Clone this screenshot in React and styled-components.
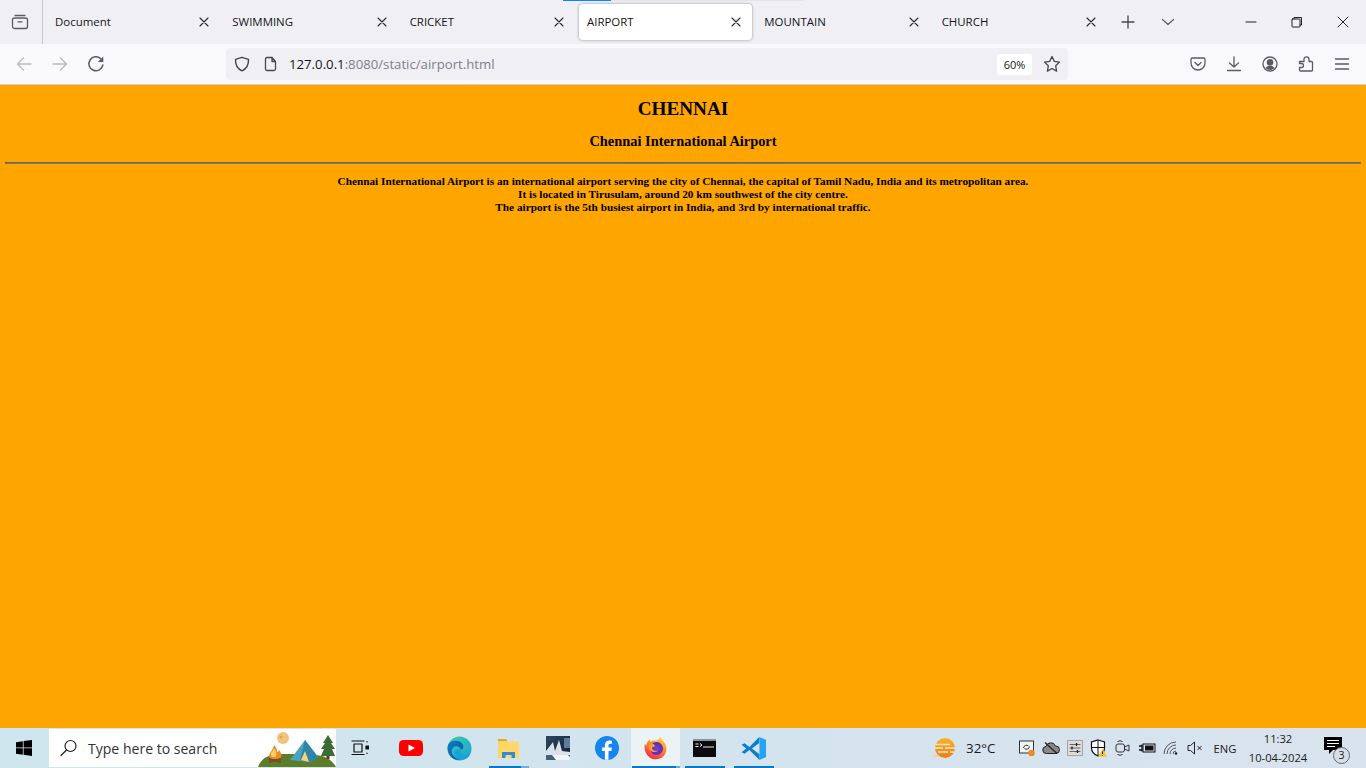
import React from "react";
import styled, { createGlobalStyle } from "styled-components";

const Global = createGlobalStyle`
  html, body { margin: 0; padding: 0; height: 100%; overflow: hidden; }
  #root { height: 100%; }
`;
const UI = `"Open Sans", "Noto Sans", sans-serif`;

const Window = styled.div`
  display: flex; flex-direction: column; width: 1366px; height: 768px; font-family: ${UI}; overflow: hidden;
`;
const TabBar = styled.div`
  position: relative; display: flex; align-items: stretch; height: 44px; background: #f0f0f4; flex: none;
`;
const Progress = styled.div`
  position: absolute; left: 563px; top: 0; width: 240px; height: 1px; background: #e4e4e6;
  &::before { content: ""; display: block; width: 48px; height: 1px; background: #0a84ff; }
`;
const ViewButton = styled.div`
  display: flex; align-items: center; justify-content: center; width: 43px; box-sizing: border-box; padding-right: 3px; border-right: 1px solid #c6c6cb; flex: none;
`;
const Tab = styled.div`
  display: flex; align-items: center; width: 177.33px; box-sizing: border-box; margin: 4px 0; flex: none; padding-left: 4px;
`;
const TabCard = styled.div`
  flex: 1; display: flex; align-items: center; justify-content: space-between; padding: 0 10px 0 8px; height: 36px; border-radius: 4px;
  background: ${p => (p.$active ? "#ffffff" : "transparent")};
  box-shadow: ${p => (p.$active ? "0 0 3px rgba(0,0,0,.4)" : "none")};
`;
const TabLabel = styled.span`
  font-size: 11.45px; color: #15141a; line-height: 16px;
`;
const TabEnd = styled.div`
  display: flex; align-items: center; justify-content: center; flex: none; width: ${p => p.$w}px;
`;
const Spacer = styled.div` flex: 1; `;
const Toolbar = styled.div`
  display: flex; align-items: center; height: 40px; background: #f9f9fb; border-bottom: 1px solid #cfcfd8; padding: 0 6px; flex: none;
`;
const ToolButton = styled.div`
  display: flex; align-items: center; justify-content: center; width: 36px; height: 32px; flex: none;
`;
const UrlBar = styled.div`
  flex: 1; display: flex; align-items: center; height: 32px; margin: 0 112px; background: #f0f0f4; border-radius: 4px; padding: 0 7px 0 8px;
`;
const UrlIcon = styled.div`
  display: flex; width: ${p => p.$w}px; flex: none; justify-content: flex-start;
`;
const Url = styled.div`
  flex: 1; font-size: 13.2px; color: #7f7f8b; white-space: nowrap;
  b { font-weight: 400; color: #15141a; }
`;
const Zoom = styled.div`
  display: flex; align-items: center; justify-content: center; width: 35px; height: 21px; background: #fff; border-radius: 3px; font-size: 11px; color: #15141a; margin-right: 11px;
`;
const Page = styled.main`
  flex: 1; background: #ffa500; padding: 0 5px; font-family: "Liberation Serif", "Times New Roman", serif; color: #000; text-align: center; font-weight: 700; min-height: 0;
`;
const City = styled.h1`
  font-size: 19.2px; line-height: 22px; margin: 13px 0 0;
`;
const Airport = styled.h2`
  font-size: 14.4px; line-height: 16px; margin: 13px 0 0;
`;
const Rule = styled.hr`
  margin: 13px 0 0; height: 2px; border: 0; background: #666; box-sizing: border-box; border-bottom: 1px solid #8a7a50;
`;
const Text = styled.p`
  font-size: 11.25px; line-height: 12.8px; margin: 11px 0 0;
`;
const Taskbar = styled.div`
  display: flex; align-items: stretch; height: 40px; flex: none; background: linear-gradient(90deg, #cfe6ef 0%, #d3e4ee 50%, #d9e3ee 100%); color: #1b1b1b;
`;
const Start = styled.div`
  display: flex; align-items: center; justify-content: center; width: 49px; box-sizing: border-box; padding-right: 1px; flex: none;
`;
const Search = styled.div`
  position: relative; display: flex; align-items: center; width: 287px; margin: 1px 1px 1px 0; background: #fff; box-sizing: border-box; padding-left: 11px; flex: none; overflow: hidden;
`;
const SearchText = styled.span`
  margin-left: 10px; font-size: 14.05px; color: #333; white-space: nowrap;
`;
const SearchArt = styled.svg`
  position: absolute; right: 0; top: 0;
`;
const TaskItem = styled.div`
  position: relative; display: flex; align-items: center; justify-content: center; width: 49px; flex: none;
  background: ${p => (p.$active ? "rgba(255,255,255,.55)" : "transparent")};
  &::after {
    content: ""; display: ${p => (p.$bar ? "block" : "none")}; position: absolute; bottom: 0; height: 2px;
    left: ${p => (p.$active ? 1 : 4.5)}px; right: ${p => (p.$active ? 0 : 4.5)}px;
    background: ${p => (p.$split
      ? `linear-gradient(90deg, #0a78c8 calc(100% - ${p.$split}px), #6aaedd calc(100% - ${p.$split}px))`
      : "#0a78c8")};
  }
`;
const TaskViewIcon = styled.span`
  display: flex; margin-right: 3px;
`;
const Weather = styled.div`
  display: flex; align-items: center; margin-left: 155px; gap: 9px; width: 82px; flex: none; font-size: 13.4px;
`;
const Tray = styled.div`
  display: flex; align-items: center; flex: none;
`;
const TrayIcon = styled.div`
  display: flex; align-items: center; justify-content: center; width: 24px; flex: none;
`;
const Lang = styled.div`
  width: 36px; text-align: center; font-size: 11.2px; flex: none; align-self: center;
`;
const Clock = styled.div`
  width: 70px; text-align: center; font-size: 11.2px; line-height: 19px; flex: none; align-self: center;
`;
const Notify = styled.div`
  position: relative; display: flex; align-items: center; justify-content: center; width: 40px; flex: none;
  svg { margin-bottom: 5px; }
`;
const Badge = styled.div`
  position: absolute; left: 20px; top: 18.5px; width: 15px; height: 15px; border-radius: 50%; background: #d4dfe8; border: 1px solid #666; font-size: 10.5px; line-height: 15px; text-align: center; color: #222;
`;

const Svg = ({ s = 16, c = "#5b5b66", w = 1.3, children, vb }) => (
  <svg width={s} height={s} viewBox={vb || `0 0 ${s} ${s}`} fill="none" stroke={c} strokeWidth={w} strokeLinecap="round" strokeLinejoin="round">{children}</svg>
);
const Close = () => <Svg s={12} c="#2b2a33" w={1.1}><path d="M2 2l8 8M10 2l-8 8" /></Svg>;

const tabs = ["Document", "SWIMMING", "CRICKET", "AIRPORT", "MOUNTAIN", "CHURCH"];

const YouTube = () => (
  <svg width="26" height="18" viewBox="0 0 26 18"><rect x="1" y="1" width="24" height="16" rx="4.5" fill="#f00" /><path d="M10.5 5.5l6.5 3.5-6.5 3.5z" fill="#fff" /></svg>
);
const Edge = () => (
  <svg width="25" height="25" viewBox="0 0 26 26">
    <defs>
      <linearGradient id="eg1" x1="0" y1="0" x2="1" y2="1"><stop offset="0" stopColor="#3bd0a0" /><stop offset="1" stopColor="#1d9fd8" /></linearGradient>
      <linearGradient id="eg2" x1="0" y1="0" x2="1" y2="1"><stop offset="0" stopColor="#0f7fd0" /><stop offset="1" stopColor="#0c4da0" /></linearGradient>
    </defs>
    <circle cx="13" cy="13" r="12.5" fill="url(#eg1)" />
    <path d="M.6 12C1.5 6 6 4.6 10 5c4 .5 7 3.2 7 6.2 0 1.7-1 2.6-2.6 2.8-1-2.5-3.5-3.8-6.2-3-3 1-4 4-3 7 1 3 4 6 8.800 6.500C6 25.500.6 20 .6 12z" fill="url(#eg2)" />
    <path d="M11 14c-3 .5-3.800 4-2.500 6.500 1.300 2.500 4.500 4.500 8.500 4 3.500-.5 6.500-3 7.500-6.500-2.500 1.500-6 1.800-8.500.6-2.500-1.200-2.500-3.500-1.300-4.500-1-.3-2.500-.4-3.700-.1z" fill="#14a3dc" />
  </svg>
);
const Folder = () => (
  <svg width="21" height="19" viewBox="0 0 21 19">
    <path d="M0 0h8l2 2.500H0z" fill="#e8a820" />
    <rect x="0" y="2.500" width="21" height="16.500" fill="#ffd767" />
    <path d="M4 19v-6h13v6h-3.500v-3h-6v3z" fill="#2a8fd6" />
  </svg>
);
const Photo = () => (
  <svg width="24" height="24" viewBox="0 0 24 24">
    <defs><linearGradient id="ph" x1="0" y1="0" x2="1" y2="1"><stop offset="0" stopColor="#2d4660" /><stop offset="1" stopColor="#0e1f33" /></linearGradient></defs>
    <rect width="24" height="24" fill="url(#ph)" />
    <path d="M0 15L7 6l2 9 4-11 3 11 8 1v3H0z" fill="#d9e2ea" />
    <path d="M0 19h24v5H0z" fill="#46607a" />
    <path d="M6 19h16l2 2v3H10z" fill="#f2f5f7" />
    <path d="M18 2h6v10h-6z" fill="#5e7d99" />
  </svg>
);
const Facebook = () => (
  <svg width="24" height="24" viewBox="0 0 24 24">
    <circle cx="12" cy="12" r="12" fill="#1685ee" />
    <path d="M13.500 23.800V15h2.900l.5-3.500h-3.400V9.500c0-1 .5-1.800 1.900-1.800H17V4.700c-.6-.1-1.600-.2-2.600-.2-2.700 0-4.500 1.600-4.500 4.600v2.400H7V15h2.900v8.800z" fill="#fff" />
  </svg>
);
const Firefox = () => (
  <svg width="24" height="24" viewBox="0 0 24 24">
    <defs>
      <linearGradient id="ff1" x1="0.700" y1="0" x2="0.200" y2="1"><stop offset="0" stopColor="#ffd43a" /><stop offset=".4" stopColor="#ff8a2b" /><stop offset="1" stopColor="#f2204f" /></linearGradient>
      <radialGradient id="ff2" cx=".5" cy=".5" r=".5"><stop offset="0" stopColor="#7a3fd8" /><stop offset="1" stopColor="#5a2ab8" /></radialGradient>
    </defs>
    <path d="M16 .6c.6 2.500 3.400 4 5 7 2.200 4 2 9.500-1.800 13-3.600 3.400-9.600 3.600-13.500.8C1.600 18.500-.6 13 1 7.500c.3 1 .8 1.800 1.300 2.200C2.500 7 3.800 4.400 6 3.400c-.3 1-.1 2 .3 2.600C8 4.200 11 4.300 13 4.500 14.500 3.500 16 2.500 16 .6z" fill="url(#ff1)" />
    <circle cx="12.500" cy="12.500" r="6.500" fill="url(#ff2)" />
    <path d="M5 9c2-1.800 4.500-1.500 5.500 0 .8 1.100-.3 2-1.500 2.100-1 .1-1.200 1.200-.5 2.200 1 1.500 3.500 2.200 5.500 1.200-1.700 2-5.800 2.200-8-.2C4.500 12.500 4.300 10.500 5 9z" fill="#ffa02e" />
  </svg>
);
const Cmd = () => (
  <svg width="23" height="18" viewBox="0 0 23 18">
    <rect width="23" height="18" fill="#0b0b0b" /><rect width="23" height="2" fill="#8b959e" />
    <path d="M2.500 5h3M2.500 7.500h3M7 4.500l2 1.500-2 1.500M10 8h11" stroke="#e8e8e8" strokeWidth="1" fill="none" />
  </svg>
);
const VSCode = () => (
  <svg width="25" height="25" viewBox="0 0 24 24">
    <path d="M17.500 1l.3 22L8 13.500 3.500 17 .5 15.500 5 12 .5 8.500l3-1.500L8 10.500z" fill="#0f7fcc" />
    <path d="M17.800 6.500v11L10.500 12z" fill="#d3e4ee" />
    <path d="M17.500 1L24 3.600v16.800L17.500 23l.3-5.500V6.500z" fill="#24a4f4" />
  </svg>
);
const SunCloud = () => (
  <svg width="24" height="22" viewBox="0 0 24 22">
    <defs><linearGradient id="sun" x1="0" y1="0" x2="0" y2="1"><stop offset="0" stopColor="#f9b32b" /><stop offset="1" stopColor="#ec7e18" /></linearGradient></defs>
    <circle cx="12" cy="11" r="10" fill="url(#sun)" />
    <path d="M3 7.500h14M1 11h9M12 11h11M5 15h10M17 15h4" stroke="#f6e3c2" strokeWidth="1.300" />
    <path d="M0 19h6" stroke="#f4c88a" strokeWidth="1.300" />
  </svg>
);

const trayIcons = [
  <svg width="18" height="17" viewBox="0 0 18 17" key="a"><rect x="1.500" y="1" width="14" height="12" fill="#eef3f6" stroke="#333" /><path d="M5.500 8a3 3 0 0 1 5-2M11.500 6.500a3 3 0 0 1-5 2" stroke="#333" fill="none" /><circle cx="13.500" cy="13" r="3.300" fill="#f08a24" /></svg>,
  <svg width="18" height="14" viewBox="0 0 18 14" key="b"><path d="M4.500 12.500a3.500 3.500 0 0 1-.5-7 5 5 0 0 1 9.500-.5 3.700 3.700 0 0 1 .5 7.500z" fill="#888" stroke="#222" /><path d="M3 1.500l12 11" stroke="#222" strokeWidth="1.200" /></svg>,
  <svg width="16" height="16" viewBox="0 0 16 16" key="c"><rect x=".5" y=".5" width="15" height="15" fill="#dcdcdc" stroke="#a5a5a5" /><path d="M2.500 4.500h11M2.500 8h11M2.500 11.500h11" stroke="#666" /><path d="M9.500 3v3M5 6.500v3M10.500 10v3" stroke="#222" strokeWidth="1.400" /></svg>,
  <svg width="18" height="18" viewBox="0 0 18 18" key="d"><path d="M8 1l6.500 2v6c0 4-3 6.500-6.500 8-3.500-1.500-6.500-4-6.500-8V3z" fill="#fff" stroke="#111" strokeWidth="1.200" /><path d="M8 1v16M1.500 8.500h13" stroke="#111" /><path d="M12.500 10l4.500 7.500H8z" fill="#f5c518" /><path d="M12.500 12.500v2.500M12.500 16v.6" stroke="#222" /></svg>,
  <svg width="16" height="18" viewBox="0 0 16 18" key="e" fill="none" stroke="#333"><rect x="1" y="5" width="8.500" height="8" rx="2" /><path d="M9.500 8l4.500-2v6l-4.500-2M2.500 2.500a5 5 0 0 1 5 0M2.500 15.500a5 5 0 0 0 5 0" /></svg>,
  <svg width="18" height="14" viewBox="0 0 18 14" key="f"><rect x="5" y="3" width="12" height="8" fill="none" stroke="#111" /><rect x="7" y="4.500" width="8.500" height="5" fill="#111" /><path d="M1 5h3M1 9h3M4 3.500v7" stroke="#111" strokeWidth="1.300" /></svg>,
  <svg width="16" height="14" viewBox="0 0 16 14" key="g" fill="none" stroke="#555"><path d="M1 13a12 12 0 0 1 12-12M4 13a9 9 0 0 1 9-9M7 13a6 6 0 0 1 6-6M10 13a3 3 0 0 1 3-3" /><circle cx="13" cy="12.500" r="1.300" fill="#222" stroke="none" /></svg>,
  <svg width="16" height="14" viewBox="0 0 16 14" key="h" fill="none" stroke="#222"><path d="M1 4.500h2.500L7.500 1v12L3.500 9.500H1z" /><path d="M10.500 5l4 4M14.500 5l-4 4" /></svg>,
];

export default function App() {
  return (
    <Window>
      <Global />
      <TabBar>
        <Progress />
        <ViewButton>
          <Svg s={18} w={1.3}>
            <path d="M4 2.500h10" /><rect x="1.500" y="5" width="15" height="10.500" rx="2" /><path d="M7 8.800h4" />
          </Svg>
        </ViewButton>
        {tabs.map(t => (
          <Tab key={t}>
            <TabCard $active={t === "AIRPORT"}>
              <TabLabel>{t}</TabLabel>
              <Close />
            </TabCard>
          </Tab>
        ))}
        <TabEnd $w={42}><Svg s={14} c="#45454e" w={1.3}><path d="M7 1v12M1 7h12" /></Svg></TabEnd>
        <TabEnd $w={38}><Svg s={14} c="#5b5b66" w={1.2}><path d="M1.500 4.500L7 9.500l5.500-5" /></Svg></TabEnd>
        <Spacer />
        <TabEnd $w={46}><Svg s={12} c="#222" w={1}><path d="M1 6h10" /></Svg></TabEnd>
        <TabEnd $w={46}><Svg s={12} c="#222" w={1}><rect x="1" y="3" width="8" height="8" rx=".5" /><path d="M3 3V1.500h7.500V9H9" /></Svg></TabEnd>
        <TabEnd $w={46}><Svg s={12} c="#222" w={1}><path d="M1 1l10 10M11 1L1 11" /></Svg></TabEnd>
      </TabBar>
      <Toolbar>
        <ToolButton><Svg s={16} c="#b9b9c0" w={1.3}><path d="M15 8H1.500M7.500 2l-6 6 6 6" /></Svg></ToolButton>
        <ToolButton><Svg s={16} c="#b9b9c0" w={1.3}><path d="M1 8h13.500M8.500 2l6 6-6 6" /></Svg></ToolButton>
        <ToolButton><Svg s={18} c="#5b5b66" w={1.5}><path d="M15.800 10a7 7 0 1 1-2-6.200" /><path d="M16.300 1.500v5.500h-5.500z" fill="#5b5b66" stroke="none" /></Svg></ToolButton>
        <UrlBar>
          <UrlIcon $w={28}><Svg s={16} c="#45454e" w={1.4}><path d="M8 1.300l6.500 2c.2 5.500-1.500 9.500-6.500 11.500C3 12.800 1.300 8.800 1.500 3.300z" /></Svg></UrlIcon>
          <UrlIcon $w={27}><Svg s={16} c="#45454e" w={1.3}><path d="M3.500 3a1.500 1.500 0 0 1 1.500-1.500h5v4h3.500V13a1.500 1.500 0 0 1-1.500 1.500H5A1.500 1.500 0 0 1 3.500 13zM10 1.500l3.500 4" /></Svg></UrlIcon>
          <Url><b>127.0.0.1</b>:8080/static/airport.html</Url>
          <Zoom>60%</Zoom>
          <Svg s={18} c="#45454e" w={1.3}><path d="M9 1.500l2.300 4.900 5.200.7-3.800 3.700.9 5.300L9 13.500l-4.600 2.600.9-5.300L1.500 7.100l5.200-.7z" /></Svg>
        </UrlBar>
        <ToolButton><Svg s={16} c="#5b5b66" w={1.3}><path d="M2.500 2h11A1.500 1.500 0 0 1 15 3.500V7c0 4-3.200 7-7 7s-7-3-7-7V3.500A1.500 1.500 0 0 1 2.500 2z" /><path d="M5 6.500L8 9.500l3-3" /></Svg></ToolButton>
        <ToolButton><Svg s={16} c="#5b5b66" w={1.3}><path d="M8 1v10M3.500 7L8 11l4.500-4M1.500 14.500h13" /></Svg></ToolButton>
        <ToolButton><Svg s={16} c="#5b5b66" w={1.3}><circle cx="8" cy="8" r="7" /><circle cx="8" cy="6.300" r="2.700" fill="#5b5b66" /><path d="M3.500 12c1-1.500 2.500-2.200 4.500-2.200s3.500.7 4.500 2.200c-1.200 1.300-2.700 2-4.500 2s-3.300-.7-4.500-2z" fill="#5b5b66" stroke="none" /></Svg></ToolButton>
        <ToolButton><Svg s={16} c="#5b5b66" w={1.3}><path d="M1.500 5.500H6V3.300a2.500 2.500 0 0 1 5 0v2.200h2.500a1 1 0 0 1 1 1V14a1 1 0 0 1-1 1H2.500a1 1 0 0 1-1-1v-2.500H3.500a2 2 0 0 0 0-4h-2z" /></Svg></ToolButton>
        <ToolButton><Svg s={16} c="#5b5b66" w={1.3}><path d="M1.500 3h13M1.500 8h13M1.500 13h13" /></Svg></ToolButton>
      </Toolbar>
      <Page>
        <City>CHENNAI</City>
        <Airport>Chennai International Airport</Airport>
        <Rule />
        <Text>
          Chennai International Airport is an international airport serving the city of Chennai, the capital of Tamil Nadu, India and its metropolitan area.<br />
          It is located in Tirusulam, around 20 km southwest of the city centre.<br />
          The airport is the 5th busiest airport in India, and 3rd by international traffic.
        </Text>
      </Page>
      <Taskbar>
        <Start>
          <svg width="16" height="16" viewBox="0 0 16 16" fill="#000"><path d="M0 2.200L6.800 1.200V7.500H0zM7.600 1.100L16 0V7.500H7.600zM0 8.300h6.800v6.500L0 13.800zM7.600 8.300H16V16l-8.400-1.200z" /></svg>
        </Start>
        <Search>
          <Svg s={18} c="#222" w={1.2}><circle cx="10.500" cy="7" r="5.500" /><path d="M6.500 11L1 16.500" /></Svg>
          <SearchText>Type here to search</SearchText>
          <SearchArt width="80" height="38" viewBox="0 0 80 38">
            <path d="M2 38c3-8 10-13 22-13 14 0 24 0 36 1 10 1 16 5 20 12z" fill="#5d7d2a" />
            <circle cx="27" cy="9" r="6" fill="#f4c27a" /><circle cx="25" cy="8" r="1.500" fill="#e0a65c" />
            <path d="M13 27c1-4 4-6 5-11 3 3 3 5 3 7 1 0 2-1 2-2 3 3 3 7 1 9h-9c-1-1-2-2-2-3z" fill="#f08a2a" />
            <path d="M15 24c1-2 3-3 3-5 2 3 3 5 2 9h-4c-1-1-1-3-1-4z" fill="#f9d060" />
            <path d="M13 33l12-3M13 30l12 3" stroke="#7a4a22" strokeWidth="2" />
            <path d="M34 31L49 11l13 17-7 5z" fill="#4ba3c4" />
            <path d="M44 31l5-20 13 17-7 5z" fill="#2f85a8" />
            <path d="M45 31l4-9 4 11z" fill="#f4d27a" />
            <path d="M72 6l5 8h-2l4 6h-3l3 7H65l3-7h-3l4-6h-2z" fill="#3d6b35" />
            <rect x="70.500" y="27" width="3" height="3" fill="#5a3b1f" />
          </SearchArt>
        </Search>
        <TaskItem>
          <TaskViewIcon>
            <Svg s={18} c="#111" w={1.2}><path d="M1 2h12M1 15.500h12M3 5h8v8H3zM16 2.500v.5M16 14v.5" /><rect x="15" y="7" width="2.500" height="3" fill="#111" /></Svg>
          </TaskViewIcon>
        </TaskItem>
        <TaskItem><YouTube /></TaskItem>
        <TaskItem><Edge /></TaskItem>
        <TaskItem $bar $split={8}><Folder /></TaskItem>
        <TaskItem><Photo /></TaskItem>
        <TaskItem><Facebook /></TaskItem>
        <TaskItem $bar $active $split={4}><Firefox /></TaskItem>
        <TaskItem $bar><Cmd /></TaskItem>
        <TaskItem $bar><VSCode /></TaskItem>
        <Weather><SunCloud /><span>32°C</span></Weather>
        <Tray>{trayIcons.map((ic, i) => <TrayIcon key={i}>{ic}</TrayIcon>)}</Tray>
        <Lang>ENG</Lang>
        <Clock>11:32<br />10-04-2024</Clock>
        <Notify>
          <svg width="18" height="17" viewBox="0 0 18 17"><path d="M0 0h18v13H9l-4 4v-4H0z" fill="#000" /><path d="M3 3.500h12M3 6.500h12M3 9.500h8" stroke="#fff" /></svg>
          <Badge>3</Badge>
        </Notify>
      </Taskbar>
    </Window>
  );
}
